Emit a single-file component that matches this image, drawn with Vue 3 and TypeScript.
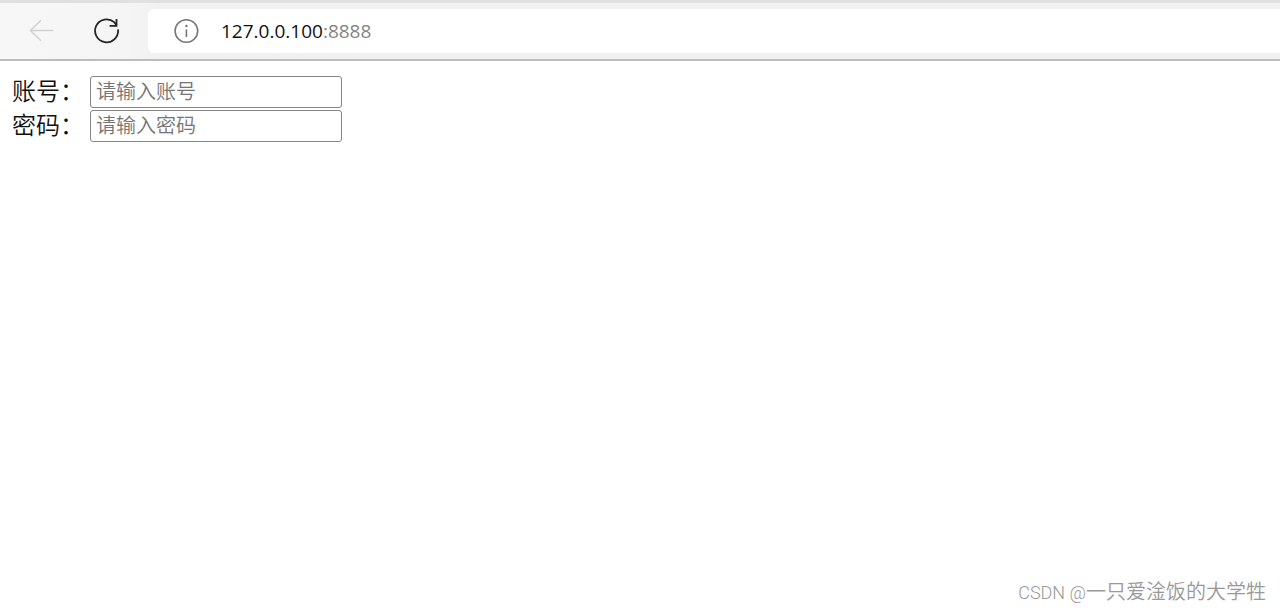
<script setup lang="ts">
import { ref } from 'vue'

interface Field {
  id: string
  label: string
  placeholder: string
  type: string
}

const fields: Field[] = [
  { id: 'account', label: '账号：', placeholder: '请输入账号', type: 'text' },
  { id: 'password', label: '密码：', placeholder: '请输入密码', type: 'password' },
]

const values = ref<Record<string, string>>({ account: '', password: '' })
</script>

<template>
  <div class="window">
    <header class="toolbar">
      <button class="tool back" type="button" aria-label="后退" disabled>
        <svg width="28" height="28" viewBox="0 0 28 28" fill="none" stroke="currentColor" stroke-width="1.6">
          <path d="M26.5 13.5H3.5M14 3.2L3.5 13.5L14 23.8" />
        </svg>
      </button>
      <button class="tool reload" type="button" aria-label="刷新">
        <svg width="28" height="28" viewBox="0 0 28 28" fill="none" stroke="currentColor" stroke-width="1.8">
          <path d="M25 12.4A11.5 11.5 0 1 1 21.2 5.2L23.5 8.3" />
          <path d="M23.5 2V8.8H16.6" />
        </svg>
      </button>
      <div class="address">
        <button class="info" type="button" aria-label="网站信息">
          <svg width="26" height="26" viewBox="0 0 26 26" fill="none" stroke="currentColor" stroke-width="1.6">
            <circle cx="13.4" cy="13" r="11.3" />
            <path d="M13.4 11.5V19" />
            <circle cx="13.4" cy="8" r="1.2" fill="currentColor" stroke="none" />
          </svg>
        </button>
        <span class="url">127.0.0.100<span class="port">:8888</span></span>
      </div>
    </header>
    <main class="page">
      <form class="form">
        <div v-for="field in fields" :key="field.id" class="row">
          <label class="label" :for="field.id">{{ field.label }}</label>
          <input
            :id="field.id"
            v-model="values[field.id]"
            class="input"
            :type="field.type"
            :placeholder="field.placeholder"
            autocomplete="off"
          />
        </div>
      </form>
    </main>
    <footer class="credit"><span class="site">CSDN @</span>一只爱淦饭的大学牲</footer>
  </div>
</template>

<style>
body {
  margin: 0;
  background: #fff;
}
</style>

<style scoped>
.window {
  display: flex;
  flex-direction: column;
  min-height: 100vh;
  box-sizing: border-box;
  font-family: 'Open Sans', 'Noto Sans CJK SC', sans-serif;
  color: #111;
}

.toolbar {
  display: flex;
  align-items: center;
  padding: 6px 0 6px 27px;
  background: linear-gradient(90deg, #f7f7f7, #f5f5f5 130px, #f1f1f1 160px);
  border-top: 3px solid #e0e0e0;
  border-bottom: 2px solid #bdbdbd;
}

.tool,
.info {
  display: flex;
  padding: 0;
  border: 0;
  background: none;
}

.back {
  color: #d2d2d2;
}

.reload {
  margin-left: 38px;
  color: #262626;
}

.address {
  display: flex;
  flex: 1;
  align-items: center;
  gap: 22px;
  height: 44px;
  margin-left: 27px;
  padding-left: 25px;
  background: #fff;
  border-radius: 6px 0 0 6px;
}

.info {
  color: #777;
}

.url {
  font-size: 19px;
  line-height: 26px;
}

.port {
  color: #858585;
}

.page {
  flex: 1;
  padding: 15px 12px;
}

.form {
  display: flex;
  flex-direction: column;
  gap: 2px;
}

.row {
  display: flex;
  align-items: flex-start;
  gap: 6px;
}

.label {
  font-family: 'Noto Sans CJK SC', sans-serif;
  font-size: 24px;
  font-weight: 350;
  line-height: 28px;
}

.input {
  box-sizing: border-box;
  width: 252px;
  height: 32px;
  padding: 0 5px 4px;
  border: 1px solid #858585;
  border-radius: 3px;
  background: #fff;
  font-family: 'Noto Sans CJK SC', sans-serif;
  font-size: 20px;
  font-weight: 350;
  color: #111;
}

.input::placeholder {
  color: #757575;
  opacity: 1;
}

.credit {
  padding: 0 14px 3px 0;
  font-family: 'Noto Sans CJK SC', sans-serif;
  font-size: 20px;
  font-weight: 350;
  line-height: 28px;
  text-align: right;
  color: #999;
}

.site {
  font-family: Roboto, sans-serif;
  font-size: 18px;
}
</style>
